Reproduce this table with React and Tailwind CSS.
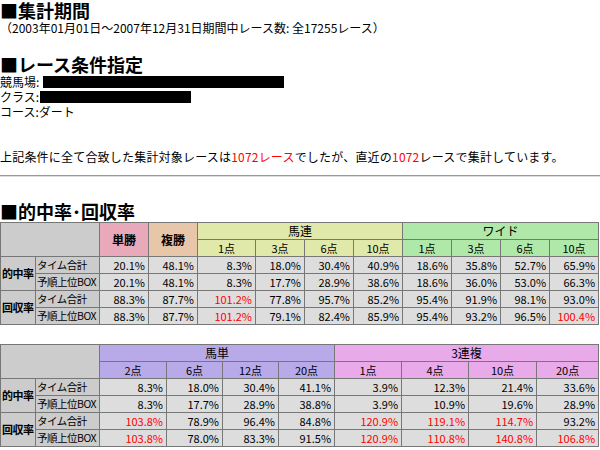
const FONT = "font-['Noto_Sans_CJK_JP','Noto_Sans',sans-serif]";

const T1 = [
  ["的中率", "タイム合計", [20.1, 48.1, 8.3, 18.0, 30.4, 40.9, 18.6, 35.8, 52.7, 65.9]],
  [null, "予順上位BOX", [20.1, 48.1, 8.3, 17.7, 28.9, 38.6, 18.6, 36.0, 53.0, 66.3]],
  ["回収率", "タイム合計", [88.3, 87.7, 101.2, 77.8, 95.7, 85.2, 95.4, 91.9, 98.1, 93.0]],
  [null, "予順上位BOX", [88.3, 87.7, 101.2, 79.1, 82.4, 85.9, 95.4, 93.2, 96.5, 100.4]],
];

const T2 = [
  ["的中率", "タイム合計", [8.3, 18.0, 30.4, 41.1, 3.9, 12.3, 21.4, 33.6]],
  [null, "予順上位BOX", [8.3, 17.7, 28.9, 38.8, 3.9, 10.9, 19.6, 28.9]],
  ["回収率", "タイム合計", [103.8, 78.9, 96.4, 84.8, 120.9, 119.1, 114.7, 93.2]],
  [null, "予順上位BOX", [103.8, 78.0, 83.3, 91.5, 120.9, 110.8, 140.8, 106.8]],
];

const cell = "border border-[#777777] p-0 leading-none";

function Heading({ children }) {
  return <div className="text-[18px] font-bold leading-[20px] text-black">{children}</div>;
}

function DataRows({ rows }) {
  return rows.map(([group, label, vals], i) => (
    <tr key={i} className="h-[17px]">
      {group && (
        <td rowSpan={2} className={`${cell} bg-[#cccccc] text-[11px] font-bold pl-[1px] tracking-[-0.5px] whitespace-nowrap`}>{group}</td>
      )}
      <td className={`${cell} bg-[#cccccc] text-[10.5px] pl-[1px] tracking-[-0.5px] whitespace-nowrap`}>{label}</td>
      {vals.map((v, j) => (
        <td key={j} className={`${cell} bg-[#dddddd] text-[11px] text-right pr-[3px] ${v > 100 ? "text-[#ff0000]" : "text-black"}`}>
          {v.toFixed(1)}%
        </td>
      ))}
    </tr>
  ));
}

export default function App() {
  return (
    <div className={`${FONT} w-[600px] h-[450px] overflow-hidden bg-white text-black`}>
      <Heading>■集計期間</Heading>
      <div className="text-[12px] leading-[15px]">（2003年01月01日～2007年12月31日期間中レース数: 全17255レース）</div>

      <div className="mt-[19px]">
        <Heading>■レース条件指定</Heading>
      </div>
      <div className="text-[12px] leading-[15px]">
        <div className="flex items-center h-[15px]">競馬場:<span className="inline-block w-[241px] h-[12px] bg-black ml-[4px]" /></div>
        <div className="flex items-center h-[15px]">クラス:<span className="inline-block w-[151px] h-[12px] bg-black ml-[1px]" /></div>
        <div className="h-[15px]">コース:ダート</div>
      </div>

      <div className="mt-[30px] text-[12px] leading-[15px] whitespace-nowrap tracking-[0.2px]">
        上記条件に全て合致した集計対象レースは<span className="text-[#ff0000]">1072レース</span>でしたが、直近の<span className="text-[#ff0000]">1072</span>レースで集計しています。
      </div>
      <div className="mt-[11px] h-[2px] border-t border-[#999999] border-b border-b-[#dddddd]" />

      <div className="mt-[24px]">
        <Heading>■的中率･回収率</Heading>
      </div>

      <table className="mt-[1px] w-[599px] table-fixed border-collapse">
        <colgroup>
          <col className="w-[35px]" />
          <col className="w-[64px]" />
          <col className="w-[49px]" />
          <col className="w-[49px]" />
          <col className="w-[58px]" />
          <col className="w-[49px]" />
          <col className="w-[49px]" />
          <col className="w-[49px]" />
          <col className="w-[49px]" />
          <col className="w-[49px]" />
          <col className="w-[49px]" />
          <col className="w-[49px]" />
        </colgroup>
        <thead>
          <tr className="h-[17px]">
            <td rowSpan={2} colSpan={2} className={`${cell} bg-[#cccccc]`} />
            <td rowSpan={2} className={`${cell} bg-[#e8aabb] text-[12px] font-bold text-center`}>単勝</td>
            <td rowSpan={2} className={`${cell} bg-[#e8c6aa] text-[12px] font-bold text-center`}>複勝</td>
            <td colSpan={4} className={`${cell} bg-[#e0e8aa] text-[12px] text-center`}>馬連</td>
            <td colSpan={4} className={`${cell} bg-[#b0e8aa] text-[12px] text-center`}>ワイド</td>
          </tr>
          <tr className="h-[17px]">
            {["1点", "3点", "6点", "10点"].map((s) => (
              <td key={"a" + s} className={`${cell} bg-[#e0e8aa] text-[11px] text-center`}>{s}</td>
            ))}
            {["1点", "3点", "6点", "10点"].map((s) => (
              <td key={"b" + s} className={`${cell} bg-[#b0e8aa] text-[11px] text-center`}>{s}</td>
            ))}
          </tr>
        </thead>
        <tbody>
          <DataRows rows={T1} />
        </tbody>
      </table>

      <table className="mt-[19px] w-[599px] table-fixed border-collapse">
        <colgroup>
          <col className="w-[35px]" />
          <col className="w-[64px]" />
          <col className="w-[67px]" />
          <col className="w-[56px]" />
          <col className="w-[56px]" />
          <col className="w-[56px]" />
          <col className="w-[67px]" />
          <col className="w-[67px]" />
          <col className="w-[68px]" />
          <col className="w-[62px]" />
        </colgroup>
        <thead>
          <tr className="h-[17px]">
            <td rowSpan={2} colSpan={2} className={`${cell} bg-[#cccccc]`} />
            <td colSpan={4} className={`${cell} bg-[#b8aae8] text-[12px] text-center`}>馬単</td>
            <td colSpan={4} className={`${cell} bg-[#e8aae8] text-[12px] text-center`}>3連複</td>
          </tr>
          <tr className="h-[17px]">
            {["2点", "6点", "12点", "20点"].map((s) => (
              <td key={"a" + s} className={`${cell} bg-[#b8aae8] text-[11px] text-center`}>{s}</td>
            ))}
            {["1点", "4点", "10点", "20点"].map((s) => (
              <td key={"b" + s} className={`${cell} bg-[#e8aae8] text-[11px] text-center`}>{s}</td>
            ))}
          </tr>
        </thead>
        <tbody>
          <DataRows rows={T2} />
        </tbody>
      </table>
    </div>
  );
}
